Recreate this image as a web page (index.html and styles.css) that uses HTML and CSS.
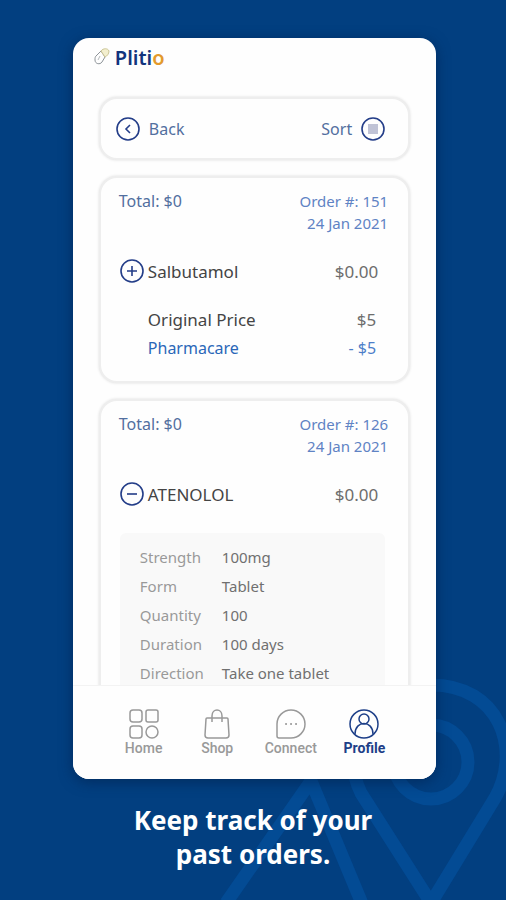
FILE: index.html
```html
<!DOCTYPE html>
<html lang="en">
<head>
<meta charset="utf-8">
<meta name="viewport" content="width=device-width, initial-scale=1">
<title>Plitio</title>
<link rel="stylesheet" href="styles.css">
</head>
<body>
<div class="page">
  <svg class="backdrop" width="300" height="240" viewBox="206 660 300 240" fill="none" stroke-width="13" aria-hidden="true">
    <circle cx="431" cy="762" r="37"/>
    <path d="M431 903 L361 793 C340 750 355 685 431 685 C500 685 522 750 495 798 Z"/>
    <path d="M226 903 L311 781 L363 906"/>
  </svg>
  <main class="phone">
    <header class="brand">
      <svg class="brand-mark" width="18" height="20" viewBox="0 0 18 20" fill="none" aria-hidden="true">
        <path d="M3 9 L8 4 L12 10 L9 15 C7 18 2 17 2 13 C2 11 2 10 3 9Z" stroke="#8c9297"/>
        <path d="M8 4 C10 1 15 1 16 4 C16 7 14 9 12 10Z" fill="#f3efcf" stroke="#cbc596"/>
        <path d="M7 9 L5 13" stroke="#b6babd"/>
      </svg>
      <h1 class="brand-name">Pliti<span class="brand-accent">o</span></h1>
    </header>
    <div class="feed">
      <div class="card toolbar">
        <button class="tool" type="button">
          <svg class="ring" viewBox="0 0 26 26"><circle cx="13" cy="13" r="11"/><path d="M15 9 L11 13 L15 17"/></svg>
          Back
        </button>
        <button class="tool" type="button">
          Sort
          <svg class="ring" viewBox="0 0 26 26"><circle cx="13" cy="13" r="11"/><path class="bars" d="M8 9h10M8 11h10M8 13h10M8 15h10M8 17h10"/></svg>
        </button>
      </div>
      <article class="card order">
        <div class="order-head">
          <p>Total: $0</p>
          <p class="order-meta">Order #: 151<br>24 Jan 2021</p>
        </div>
        <div class="product">
          <button class="toggle" type="button" aria-label="Expand Salbutamol">
            <svg class="ring" viewBox="0 0 26 26"><circle cx="13" cy="13" r="11"/><path d="M8 13h10M13 8v10"/></svg>
          </button>
          <h2 class="product-name">Salbutamol</h2>
          <span class="amount">$0.00</span>
        </div>
        <dl class="prices">
          <dt>Original Price</dt><dd>$5</dd>
          <dt class="discount strong">Pharmacare</dt><dd class="discount">- $5</dd>
        </dl>
      </article>
      <article class="card order">
        <div class="order-head">
          <p>Total: $0</p>
          <p class="order-meta">Order #: 126<br>24 Jan 2021</p>
        </div>
        <div class="product">
          <button class="toggle" type="button" aria-label="Collapse Atenolol">
            <svg class="ring" viewBox="0 0 26 26"><circle cx="13" cy="13" r="11"/><path d="M8 13h10"/></svg>
          </button>
          <h2 class="product-name">ATENOLOL</h2>
          <span class="amount">$0.00</span>
        </div>
        <dl class="details">
          <dt>Strength</dt><dd>100mg</dd>
          <dt>Form</dt><dd>Tablet</dd>
          <dt>Quantity</dt><dd>100</dd>
          <dt>Duration</dt><dd>100 days</dd>
          <dt>Direction</dt><dd>Take one tablet</dd>
        </dl>
      </article>
    </div>
    <nav class="tabs">
      <a class="tab" href="#home">
        <svg class="tab-icon" viewBox="0 0 30 30"><rect x="1" y="1" width="12" height="12" rx="3"/><rect x="17" y="1" width="12" height="12" rx="2"/><rect x="1" y="17" width="12" height="12" rx="3"/><circle cx="23" cy="23" r="6"/></svg>
        Home
      </a>
      <a class="tab" href="#shop">
        <svg class="tab-icon" viewBox="0 0 30 30"><path d="M5 9h20c1 0 1 0 1 1l1 16c0 2-1 3-3 3H6c-2 0-3-1-3-3l1-16c0-1 0-1 1-1ZM10 13V7c0-8 10-8 10 0v6"/></svg>
        Shop
      </a>
      <a class="tab" href="#connect">
        <svg class="tab-icon" viewBox="0 0 30 30"><path d="M1 15a14 14 0 1 1 14 14H3c-1 0-2-1-2-2Z"/><path class="dots" d="M10 15h.1M15 15h.1M20 15h.1"/></svg>
        Connect
      </a>
      <a class="tab tab-active" href="#profile" aria-current="page">
        <svg class="tab-icon" viewBox="0 0 30 30"><circle cx="15" cy="15" r="14"/><circle cx="15" cy="10" r="5"/><path d="M6 25C6 11 24 11 24 25"/></svg>
        Profile
      </a>
    </nav>
  </main>
  <p class="caption">Keep track of your<br>past orders.</p>
</div>
</body>
</html>
```
FILE: styles.css
```css
* { box-sizing: border-box; }
body, h1, h2, p, dl, dd { margin: 0; }
body {
  font-family: "Noto Sans", sans-serif;
  background: #023f80;
}
button {
  padding: 0;
  border: 0;
  background: none;
  color: inherit;
  font: inherit;
  cursor: pointer;
}
.page {
  position: relative;
  display: flex;
  flex-direction: column;
  height: 100vh;
  min-height: 600px;
  padding: 38px 14% 29px;
  overflow: hidden;
}
.backdrop {
  position: absolute;
  right: 0;
  bottom: 0;
  stroke: #034b94;
}
.phone {
  position: relative;
  display: flex;
  flex: 1;
  flex-direction: column;
  min-height: 0;
  margin: 0 -1px 0 2px;
  overflow: hidden;
  border-radius: 16px;
  background: #fefefe;
  box-shadow: 0 3px 14px #00204a99;
}
.brand {
  display: flex;
  align-items: center;
  gap: 4px;
  height: 38px;
  padding-left: 20px;
}
.brand-name {
  color: #12347d;
  font-size: 20px;
  font-weight: 600;
}
.brand-accent { color: #e39a2c; }
.feed {
  display: flex;
  flex: 1;
  flex-direction: column;
  gap: 16px;
  min-height: 0;
  padding: 21px 26px 0;
  overflow: hidden;
}
.card {
  flex: none;
  border: 2px solid #eee;
  border-radius: 18px;
  background: #fefefe;
  box-shadow: 0 0 3px #ddd;
}
.toolbar {
  display: flex;
  align-items: center;
  justify-content: space-between;
  height: 63px;
  padding: 0 22px 0 14px;
  color: #526f9f;
  font-size: 16px;
}
.tool {
  display: flex;
  align-items: center;
  gap: 8px;
}
.ring {
  display: block;
  width: 26px;
  height: 26px;
  fill: none;
  stroke: #233d88;
  stroke-width: 1.6;
}
.ring .bars {
  stroke: #8288ae;
  stroke-width: 1;
}
.order { padding: 12px 20px 18px 18px; }
.order-head {
  display: flex;
  justify-content: space-between;
  color: #526f9f;
  font-size: 16px;
  line-height: 22px;
}
.order-meta {
  color: #5f83c4;
  font-size: 15px;
  text-align: right;
}
.product {
  display: flex;
  align-items: center;
  gap: 3px;
  height: 26px;
  margin-top: 24px;
  padding-right: 10px;
  font-size: 17px;
}
.product-name {
  flex: 1;
  color: #444;
  font-size: 17px;
  font-weight: 400;
}
.amount { color: #6d6d6d; }
.prices {
  display: grid;
  grid-template-columns: 1fr auto;
  margin-top: 21px;
  padding: 0 12px 0 29px;
  color: #444;
  font-size: 17px;
  line-height: 29px;
}
.prices dd {
  color: #6d6d6d;
  text-align: right;
}
.prices .discount {
  color: #4d7ec9;
  font-size: 16px;
}
.prices .strong { color: #2a67b8; }
.details {
  display: grid;
  grid-template-columns: 82px 1fr;
  margin: 26px 3px 0 1px;
  padding: 10px 20px;
  border-radius: 6px;
  background: #f9f9f9;
  color: #999;
  font-size: 15px;
  line-height: 29px;
}
.details dd { color: #707070; }
.tabs {
  display: grid;
  flex: none;
  grid-template-columns: repeat(4, 1fr);
  height: 94px;
  padding: 23px 35px 0 34px;
  border-top: 1px solid #f3f3f3;
  background: #fefefe;
}
.tab {
  display: flex;
  flex-direction: column;
  align-items: center;
  color: #999;
  font: 500 14px/18px Roboto, sans-serif;
  text-decoration: none;
}
.tab-icon {
  width: 30px;
  height: 30px;
  fill: none;
  stroke: currentColor;
  stroke-width: 1.5;
}
.tab-icon .dots {
  stroke-linecap: round;
  stroke-width: 2;
}
.tab-active {
  color: #1d3f88;
  font-weight: 700;
}
.caption {
  position: relative;
  margin-top: 24px;
  color: #fff;
  font-size: 26px;
  font-weight: 700;
  line-height: 34px;
  text-align: center;
}
```
